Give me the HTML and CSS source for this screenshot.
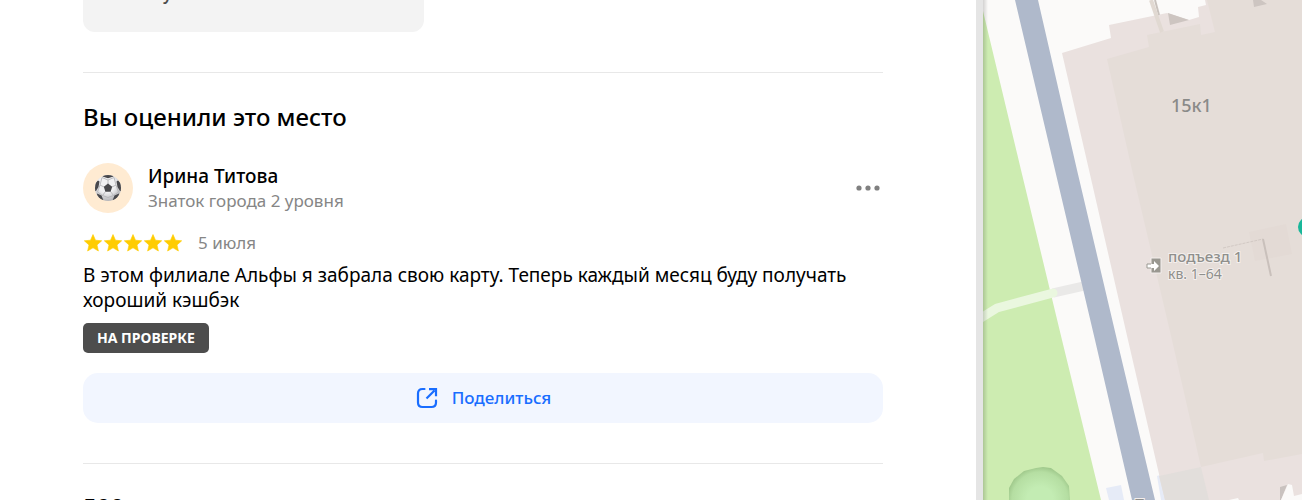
FILE: index.html
```html
<!DOCTYPE html>
<html lang="ru">

<head>
    <meta charset="UTF-8">
    <meta name="viewport" content="width=device-width, initial-scale=1.0">
    <title>Отзывы</title>
    <link rel="stylesheet" href="styles.css">
</head>

<body>
    <div class="layout">
        <main class="panel">
            <div class="info-card">Обслуживание</div>

            <section class="my-review">
                <h2>Вы оценили это место</h2>
                <div class="author">
                    <div class="avatar">
                        <svg width="28" height="28" viewBox="0 0 28 28" aria-hidden="true">
                            <defs>
                                <radialGradient id="ball" cx="0.45" cy="0.35" r="0.65">
                                    <stop offset="0.5" stop-color="#f0f0f2" />
                                    <stop offset="1" stop-color="#b4b4b8" />
                                </radialGradient>
                                <clipPath id="ballClip">
                                    <circle cx="14" cy="14" r="13" />
                                </clipPath>
                            </defs>
                            <circle cx="14" cy="14" r="13" fill="url(#ball)" />
                            <g clip-path="url(#ballClip)">
                                <path d="M14 10V6M18 13l4-2M16.500 17.500l3 4M11.500 17.500l-3 4M10 13l-4-2M14 6L8 3.500M14 6l6-2.500M6 11L8 3.500M22 11l-2-7.500M6 11l-2.500 7 5 3.500M22 11l2.500 7-5 3.500M8.500 21.500l5.500 2 5.500-2" fill="none" stroke="#b0b0b4" stroke-width="0.800" />
                                <path d="M14 9.500l4.200 3.200-1.600 5h-5.200l-1.600-5zM10 0h8l1.500 2.500L14 4.300 8.500 2.500zM0 10l4-3.500 1.500 1-1 5.500L2 17H0zM28 10l-4-3.500-1.500 1 1 5.500 2.500 4h2zM3 19.500l4.500 2 2 5-6-2zM25 19.500l-4.500 2-2 5 6-2z" fill="#48484c" />
                            </g>
                        </svg>
                    </div>
                    <div class="author-info">
                        <div class="author-name">Ирина Титова</div>
                        <div class="author-level">Знаток города 2 уровня</div>
                    </div>
                    <button class="more" type="button" aria-label="Ещё">
                        <svg width="24" height="24" viewBox="0 0 24 24" fill="#808080">
                            <circle cx="3" cy="12" r="2.600" />
                            <circle cx="12" cy="12" r="2.600" />
                            <circle cx="21" cy="12" r="2.600" />
                        </svg>
                    </button>
                </div>
                <div class="rating">
                    <svg class="stars" width="100" height="20" viewBox="0 0 100 20" role="img" aria-label="Оценка 5">
                        <defs>
                            <path id="star" d="M10 1.500l2.500 5.700 6.200.600-4.700 4.100 1.400 6.100L10 14.800 4.600 18 6 11.900 1.300 7.800l6.200-.600z" />
                        </defs>
                        <g fill="#fc0" stroke="#fc0" stroke-width="0.600" stroke-linejoin="round">
                            <use href="#star" />
                            <use href="#star" x="20" />
                            <use href="#star" x="40" />
                            <use href="#star" x="60" />
                            <use href="#star" x="80" />
                        </g>
                    </svg>
                    <span class="date">5 июля</span>
                </div>
                <p class="review-text">В этом филиале Альфы я забрала свою карту. Теперь каждый месяц буду получать хороший кэшбэк</p>
                <span class="status">НА ПРОВЕРКЕ</span>
                <button class="share" type="button">
                    <svg width="24" height="24" viewBox="0 0 24 24" fill="none" stroke="#196dff" stroke-width="2.200" aria-hidden="true">
                        <path d="M9.500 3H7.500C4.500 3 3 4.500 3 7.500v9C3 19.500 4.500 21 7.500 21h9c3 0 4.500-1.500 4.500-4.500v-2" stroke-linecap="round" />
                        <path d="M11.500 12.500l8-8M14 3.200h7v7" />
                    </svg>
                    Поделиться
                </button>
            </section>

            <section class="reviews">
                <h2>500 отзывов</h2>
            </section>
        </main>

        <aside class="map">
            <svg viewBox="0 0 319 500" preserveAspectRatio="xMinYMin slice" role="img" aria-label="Карта">
                <defs>
                    <linearGradient id="edge">
                        <stop offset="0" stop-opacity="0.160" />
                        <stop offset="1" stop-opacity="0" />
                    </linearGradient>
                    <radialGradient id="bush" gradientUnits="userSpaceOnUse" cx="57" cy="500" r="33">
                        <stop offset="0.4" stop-color="#c3ecb3" />
                        <stop offset="0.850" stop-color="#b5dea2" />
                        <stop offset="1" stop-color="#a0c98c" />
                    </radialGradient>
                </defs>
                <rect width="319" height="500" fill="#fbfaf9" />

                <!-- park -->
                <path d="M0 11L38 170l41 170 39 160H0z" fill="#cdecb1" />
                <path d="M26 500v-12l5-9 10-8 12-3 7-1 8 1 11 8 7 10 1 14z" fill="url(#bush)" />

                <!-- paths and road -->
                <path d="M70 293l31-7" stroke="#eae9e8" stroke-width="9" />
                <path d="M-2 318l16-10 56-15" fill="none" stroke="#eaf7df" stroke-width="9" stroke-linecap="round" stroke-linejoin="round" />
                <path d="M32 0h23l39 170 40 170 38 160h-23l-37-160L72 170z" fill="#afb9cb" />
                <path d="M123 488l15-3 3 15h-15zM174 476l3-1 6 25h-5z" fill="#e6ebf7" />

                <!-- building -->
                <path d="M79 53l49-15-2-13 58-12 22 7 10-3-1-10 8-2-1-5h97v500H182l-37-160-39-170z" fill="#eae1df" />
                <path d="M124 59l42-12-2-12 53-11 1 11 14-3-8-32h95v454l-38 7-1-8-62 14-29-127-40-170z" fill="#e5ddd8" />
                <path d="M176 476l42-9 8 33h-44z" fill="#e2dedb" />
                <path d="M185 13l21 7-19 5zM270 0l1 7 13-3-6-4z" fill="#cdc5c1" />
                <path d="M172 0l4 15" stroke="#c9c2bd" stroke-width="2" />
                <path d="M168 0l11 32" stroke="#e1d9d2" stroke-width="4" />
                <path d="M266 232l37-8 6 30-37 7z" fill="#e3dad5" />
                <path d="M240 248l40-9" stroke="#d2c9c4" stroke-dasharray="3 1" />
                <path d="M280 239l8 37" stroke="#c9c0bb" stroke-width="2" />
                <path d="M297 487l7-2-6 15h-1z" fill="#c9c2bf" />
                <path d="M298 500l7-16 4 1 2 11 8-2v6zM246 500l9-2 1 2z" fill="#fbfaf9" />

                <!-- entrance -->
                <path d="M168 258h10v15h-10z" fill="#9a9891" stroke="#f4efed" />
                <path d="M164 264h7v-3l5 5-5 5v-3h-7z" fill="#fff" />
                <path d="M164 264h4M164 268h4M164 264v4" stroke="#9a9891" />
                <text class="map-label map-entrance" x="185" y="262">подъезд 1</text>
                <text class="map-label map-flats" x="185" y="279">кв. 1–64</text>
                <text class="map-house" x="188" y="112">15к1</text>
                <text class="map-label map-entrance" x="151" y="509">П</text>
                <circle cx="325" cy="227" r="10" fill="#19b79a" />
                <rect width="5" height="500" fill="url(#edge)" />
            </svg>
        </aside>
    </div>
</body>

</html>
```
FILE: styles.css
```css
body {
    margin: 0;
    font-family: "Noto Sans", "Open Sans", sans-serif;
    color: #000;
    background-color: #fff;
}

h2,
p {
    margin: 0;
    font-weight: 500;
}

button {
    font-family: inherit;
    border: none;
    cursor: pointer;
}

.layout {
    display: grid;
    grid-template-columns: 976fr 326fr;
    height: 100vh;
    overflow: hidden;
}

.panel {
    padding: 0 93px 0 83px;
    overflow: hidden;
}

.info-card {
    box-sizing: border-box;
    width: 341px;
    max-width: 100%;
    height: 60px;
    margin-top: -28px;
    padding: 12px 40px;
    border-radius: 12px;
    background-color: #f3f3f3;
    color: #4d4d4d;
    font-size: 16px;
    font-weight: 600;
    line-height: 20px;
}

.my-review {
    margin-top: 40px;
    padding: 29px 0 40px;
    border-top: 1px solid #e8e8e8;
}

h2 {
    font-size: 24px;
    line-height: 30px;
}

.author {
    display: flex;
    align-items: center;
    gap: 15px;
    margin-top: 31px;
}

.avatar {
    display: flex;
    align-items: center;
    justify-content: center;
    width: 50px;
    height: 50px;
    border-radius: 50%;
    background-color: #ffebd2;
}

.author-info {
    flex: 1;
}

.author-name {
    font-size: 19px;
    font-weight: 500;
    line-height: 26px;
}

.author-level,
.date {
    color: #868686;
    font-size: 17px;
    line-height: 24px;
}

.more {
    display: flex;
    padding: 3px;
    background: none;
}

.rating {
    display: flex;
    align-items: center;
    gap: 15px;
    margin-top: 18px;
}

.review-text {
    margin-top: 8px;
    font-size: 19px;
    font-weight: 400;
    line-height: 25px;
}

.status {
    display: block;
    width: fit-content;
    margin-top: 10px;
    padding: 5px 14px;
    border-radius: 5px;
    background-color: #4d4d4d;
    color: #fff;
    font-size: 14px;
    font-weight: 700;
    line-height: 20px;
}

.share {
    display: flex;
    align-items: center;
    justify-content: center;
    gap: 13px;
    width: 100%;
    margin-top: 20px;
    padding: 12px;
    border-radius: 15px;
    background-color: #f2f6ff;
    color: #196dff;
    font-size: 17px;
    font-weight: 500;
    line-height: 26px;
}

.reviews {
    padding-top: 28px;
    border-top: 1px solid #e8e8e8;
}

.map {
    border-left: 7px solid #e5e5e5;
    overflow: hidden;
}

.map svg {
    display: block;
    width: 100%;
    height: 100%;
}

.map-label {
    fill: #8f8f8c;
    stroke: #f4efed;
    stroke-width: 2px;
    paint-order: stroke;
}

.map-entrance {
    font-size: 15px;
    font-weight: 500;
}

.map-flats {
    font-size: 14px;
}

.map-house {
    fill: #8a8a88;
    font-size: 18px;
    font-weight: 500;
}
```
